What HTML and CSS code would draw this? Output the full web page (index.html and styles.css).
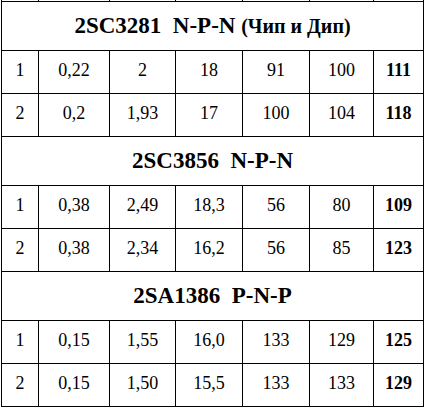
FILE: index.html
```html
<!DOCTYPE html>
<html>
<head>
<meta charset="utf-8">
<link rel="stylesheet" href="styles.css">
</head>
<body>
<table class="specs">
  <colgroup>
    <col class="c1"><col class="c2"><col class="c3"><col class="c4"><col class="c5"><col class="c6"><col class="c7">
  </colgroup>
  <tr class="stub"><td></td><td></td><td></td><td></td><td></td><td></td><td></td></tr>
  <tr class="head"><td colspan="7">2SC3281&nbsp; N-P-N <span class="note">(Чип и Дип)</span></td></tr>
  <tr class="row"><td>1</td><td>0,22</td><td>2</td><td>18</td><td>91</td><td>100</td><td class="res">111</td></tr>
  <tr class="row"><td>2</td><td>0,2</td><td>1,93</td><td>17</td><td>100</td><td>104</td><td class="res">118</td></tr>
  <tr class="head"><td colspan="7">2SC3856&nbsp; N-P-N</td></tr>
  <tr class="row"><td>1</td><td>0,38</td><td>2,49</td><td>18,3</td><td>56</td><td>80</td><td class="res">109</td></tr>
  <tr class="row"><td>2</td><td>0,38</td><td>2,34</td><td>16,2</td><td>56</td><td>85</td><td class="res">123</td></tr>
  <tr class="head"><td colspan="7">2SA1386&nbsp; P-N-P</td></tr>
  <tr class="row"><td>1</td><td>0,15</td><td>1,55</td><td>16,0</td><td>133</td><td>129</td><td class="res">125</td></tr>
  <tr class="row"><td>2</td><td>0,15</td><td>1,50</td><td>15,5</td><td>133</td><td>133</td><td class="res">129</td></tr>
</table>
</body>
</html>
```
FILE: styles.css
```css
html, body {
  margin: 0;
  padding: 0;
  background: #fff;
}
body {
  font-family: "Liberation Serif", "Times New Roman", serif;
  color: #000;
}
.specs {
  border-collapse: collapse;
  table-layout: fixed;
  margin-left: 1px;
  font-family: "Liberation Serif", "Times New Roman", serif;
}
.specs td {
  border: 1px solid #000;
  padding: 0;
  text-align: center;
  vertical-align: middle;
  line-height: 1;
}
.c1 { width: 37px; }
.c2 { width: 71px; }
.c3 { width: 66px; }
.c4 { width: 67px; }
.c5 { width: 67px; }
.c6 { width: 64px; }
.c7 { width: 50px; }
.stub td {
  border-top: 0;
  height: 1px;
}
.head td {
  height: 47px;
  font-size: 23px;
  font-weight: bold;
  padding-bottom: 1px;
}
.note {
  font-size: 20px;
}
.row td {
  height: 38px;
  font-size: 18px;
  padding-bottom: 4px;
}
.row td.res {
  font-weight: bold;
}
```
